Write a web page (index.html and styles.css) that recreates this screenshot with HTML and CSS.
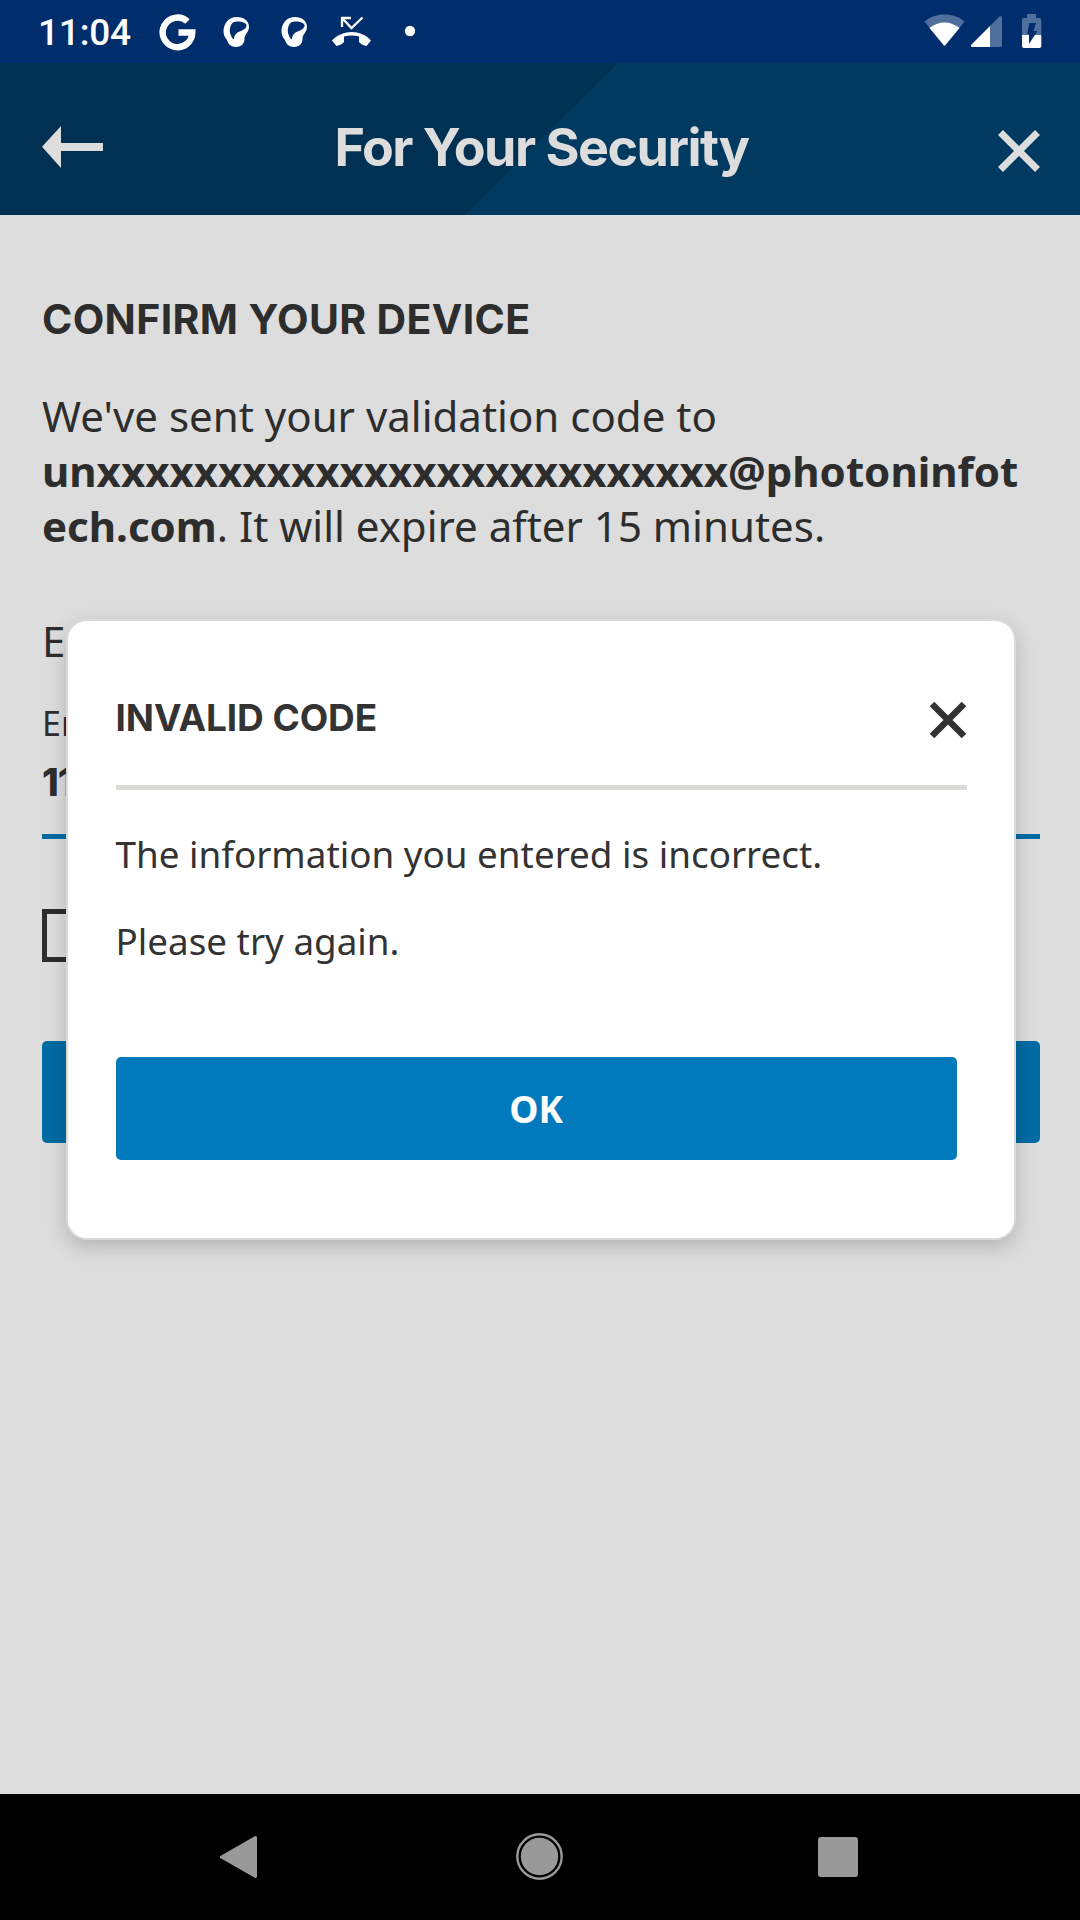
FILE: index.html
```html
<!DOCTYPE html>
<html lang="en">
<head>
<meta charset="utf-8">
<title>For Your Security</title>
<link rel="stylesheet" href="styles.css">
</head>
<body>
<div class="screen">
  <div class="status">
    <span class="clock">11:04</span>
    <svg class="notifications" width="260" height="63" viewBox="156 0 260 63">
      <path class="g-mark" d="M187.500 21.500A14.800 14.800 0 1 0 192.300 32.500H178.500"/>
      <g id="app">
        <path fill="#fff" fill-rule="evenodd" d="M237 17c7 0 12 4 12 10 0 5-4 7-4.500 11 .500 5-3 9-8.500 9-5 0-8-3-9-7-2-2-3.500-5-3.500-8.500C223.500 23 229 17 237 17zM233 22.500c-3.500 3-4 9-2 13 .500 2 1.500 3.300 3 3.800 0-4 2-6.300 5.500-7.800 4.500-1.500 7.500-4 7-6.500-1-3.500-9.500-4.500-13.500-2.500z"/>
      </g>
      <use href="#app" x="58"/>
      <path fill="#fff" d="M332 40.500c10.500-11.500 29-11.500 39 0l-4.500 5.500c-4-1-6.500-2.500-7.500-4v-5.500c-4.500-1.500-10.500-1.500-15 0V42c-1.500 1.800-4 3.300-7.500 4z"/>
      <path fill="none" stroke="#fff" stroke-width="2.300" d="M342 27v-9h9M342.500 18.500L351.500 28l11-10.500"/>
      <circle cx="410" cy="31" r="5.200" fill="#fff"/>
    </svg>
    <svg class="system" width="120" height="63" viewBox="922 0 120 63">
      <path fill="#4f6f9d" d="M924.500 21.500C935 12 954 12 964.500 21.500L959 28.500H930z"/>
      <path fill="#fff" d="M929.500 28c8.500-7.500 21.500-7.500 30 0l-14 17q-1 1.500-2 0z"/>
      <path fill="#4f6f9d" d="M990 26l9.500-9.500q2.500-1.500 2.500 1.500v27q0 2-2 2h-10z"/>
      <path fill="#fff" d="M990 26v21h-17.500q-2.500-.500-1-2.500z"/>
      <path fill="#4f6f9d" d="M1027 14h9v4h3q2.300 0 2.300 2v15H1022V20q0-2 2-2h3z"/>
      <path fill="#fff" d="M1022 35h19.300v11q0 2-2 2H1024q-2 0-2-2z"/>
      <path fill="#002d6b" d="M1029.500 23h6.500l-2.500 8h4l-8.500 13v-10h-2z"/>
    </svg>
  </div>

  <header class="header">
    <svg width="61" height="42" viewBox="0 0 61 42"><path fill="#ddd" d="M0 20.800L19 0v17h42v8H19v17z"/></svg>
    <h1 class="title">For Your Security</h1>
    <svg class="header-close" width="42" height="42" viewBox="0 0 42 42"><path class="cross" d="M2.500 2.500l37 37M39.500 2.500l-37 37"/></svg>
  </header>

  <main class="content">
    <h2 class="heading">CONFIRM YOUR DEVICE</h2>
    <p class="message">We've sent your validation code to <strong>unxxxxxxxxxxxxxxxxxxxxxxxxxx@photoninfotech.com</strong>. It will expire after 15 minutes.</p>
    <p class="prompt">E</p>
    <div class="field">
      <span class="label">En</span>
      <span class="value">11</span>
    </div>
    <div class="checkbox"></div>
    <div class="submit"></div>
  </main>

  <nav class="navbar">
    <svg width="1080" height="126" viewBox="0 0 1080 126">
      <path class="nav-shape" stroke="#999" stroke-width="3" stroke-linejoin="round" d="M221.500 63L255.500 43.500v39z"/>
      <circle class="nav-shape" cx="539.500" cy="62.500" r="18.700"/>
      <circle fill="none" stroke="#999" stroke-width="2.400" cx="539.500" cy="62.500" r="22.200"/>
      <rect class="nav-shape" x="818" y="43" width="40" height="40" rx="3"/>
    </svg>
  </nav>

  <section class="dialog">
    <div class="dialog-head">
      <h2 class="dialog-title">INVALID CODE</h2>
      <svg class="dialog-close" width="38" height="38" viewBox="0 0 38 38"><path class="cross dark" d="M3 3l32 32M35 3L3 35"/></svg>
    </div>
    <p class="dialog-text">The information you entered is incorrect.</p>
    <p class="dialog-text second">Please try again.</p>
    <button class="ok">OK</button>
  </section>
</div>
</body>
</html>
```
FILE: styles.css
```css
* { box-sizing: border-box; }
body { margin: 0; }
h1, h2, p { margin: 0; }
svg { display: block; flex: none; }

.screen {
  position: relative;
  display: flex;
  flex-direction: column;
  width: 1080px;
  height: 1920px;
  overflow: hidden;
  background: #ddd;
  color: #2d2d2d;
  font-family: "Noto Sans", sans-serif;
}

.status {
  display: flex;
  align-items: center;
  height: 63px;
  padding: 0 38px;
  background: #002d6b;
}
.clock {
  width: 118px;
  padding-top: 3px;
  color: #fff;
  font: 500 37px/60px Roboto, sans-serif;
  letter-spacing: -.2px;
  white-space: nowrap;
}
.system { margin-left: auto; }
.g-mark { fill: none; stroke: #fff; stroke-width: 6.4; }

.header {
  display: flex;
  align-items: center;
  justify-content: space-between;
  height: 152px;
  padding: 16px 40px 0 42px;
  background: linear-gradient(135.3deg, #003052 0, #003052 50.050%, #003a60 50.150%);
}
.title {
  margin: 2px 18px 0 0;
  color: #ddd;
  font: 700 52px/64px Inter, sans-serif;
  letter-spacing: -1.500px;
  white-space: nowrap;
}
.header-close { margin-top: 7px; }
.cross { fill: none; stroke: #ddd; stroke-width: 7; }
.cross.dark { stroke: #333; stroke-width: 6.500; }

.content {
  flex: 1;
  padding: 78px 40px 0 42px;
}
.heading {
  font: 700 41px/52px Inter, sans-serif;
  letter-spacing: .35px;
  white-space: nowrap;
}
.message {
  margin-top: 43px;
  font-size: 42.030px;
  line-height: 55px;
  overflow-wrap: anywhere;
}
.prompt {
  margin-top: 60px;
  font-size: 42px;
  line-height: 55px;
}
.field {
  display: flex;
  flex-direction: column;
  height: 142px;
  margin-top: 29px;
  border-bottom: 5px solid #006ba3;
}
.label { font-size: 34px; line-height: 52px; }
.value { font: 800 38px/66px Inter, sans-serif; letter-spacing: -1px; }
.checkbox {
  width: 53px;
  height: 53px;
  margin-top: 70px;
  border: 5px solid #2d2d2d;
}
.submit {
  height: 102px;
  margin-top: 79px;
  border-radius: 5px;
  background: #006ba3;
}

.navbar { height: 126px; background: #000; }
.nav-shape { fill: #999; }

.dialog {
  position: absolute;
  left: 66px;
  top: 619px;
  width: 950px;
  height: 621px;
  padding: 58px 47px 0 47.500px;
  border: 2px solid #dadad6;
  border-radius: 21px;
  background: #fff;
  color: #333;
  box-shadow: 0 7px 20px rgba(0, 0, 0, .19);
}
.dialog-head {
  display: flex;
  align-items: center;
  justify-content: space-between;
  height: 111px;
  padding-bottom: 27px;
  border-bottom: 5px solid #dadad6;
}
.dialog-title {
  margin-top: -2px;
  font: 700 37px/46px Inter, sans-serif;
  letter-spacing: -.1px;
  white-space: nowrap;
}
.dialog-close { margin-top: 3px; }
.dialog-text {
  margin-top: 39px;
  font-size: 36.800px;
  line-height: 50px;
  white-space: nowrap;
}
.second { margin-top: 37px; }
.ok {
  display: block;
  width: 841.500px;
  height: 103px;
  margin-top: 91px;
  padding: 0;
  border: 0;
  border-radius: 5px;
  background: #007abd;
  color: #fff;
  font: 700 37px/103px "Noto Sans", sans-serif;
}
```
